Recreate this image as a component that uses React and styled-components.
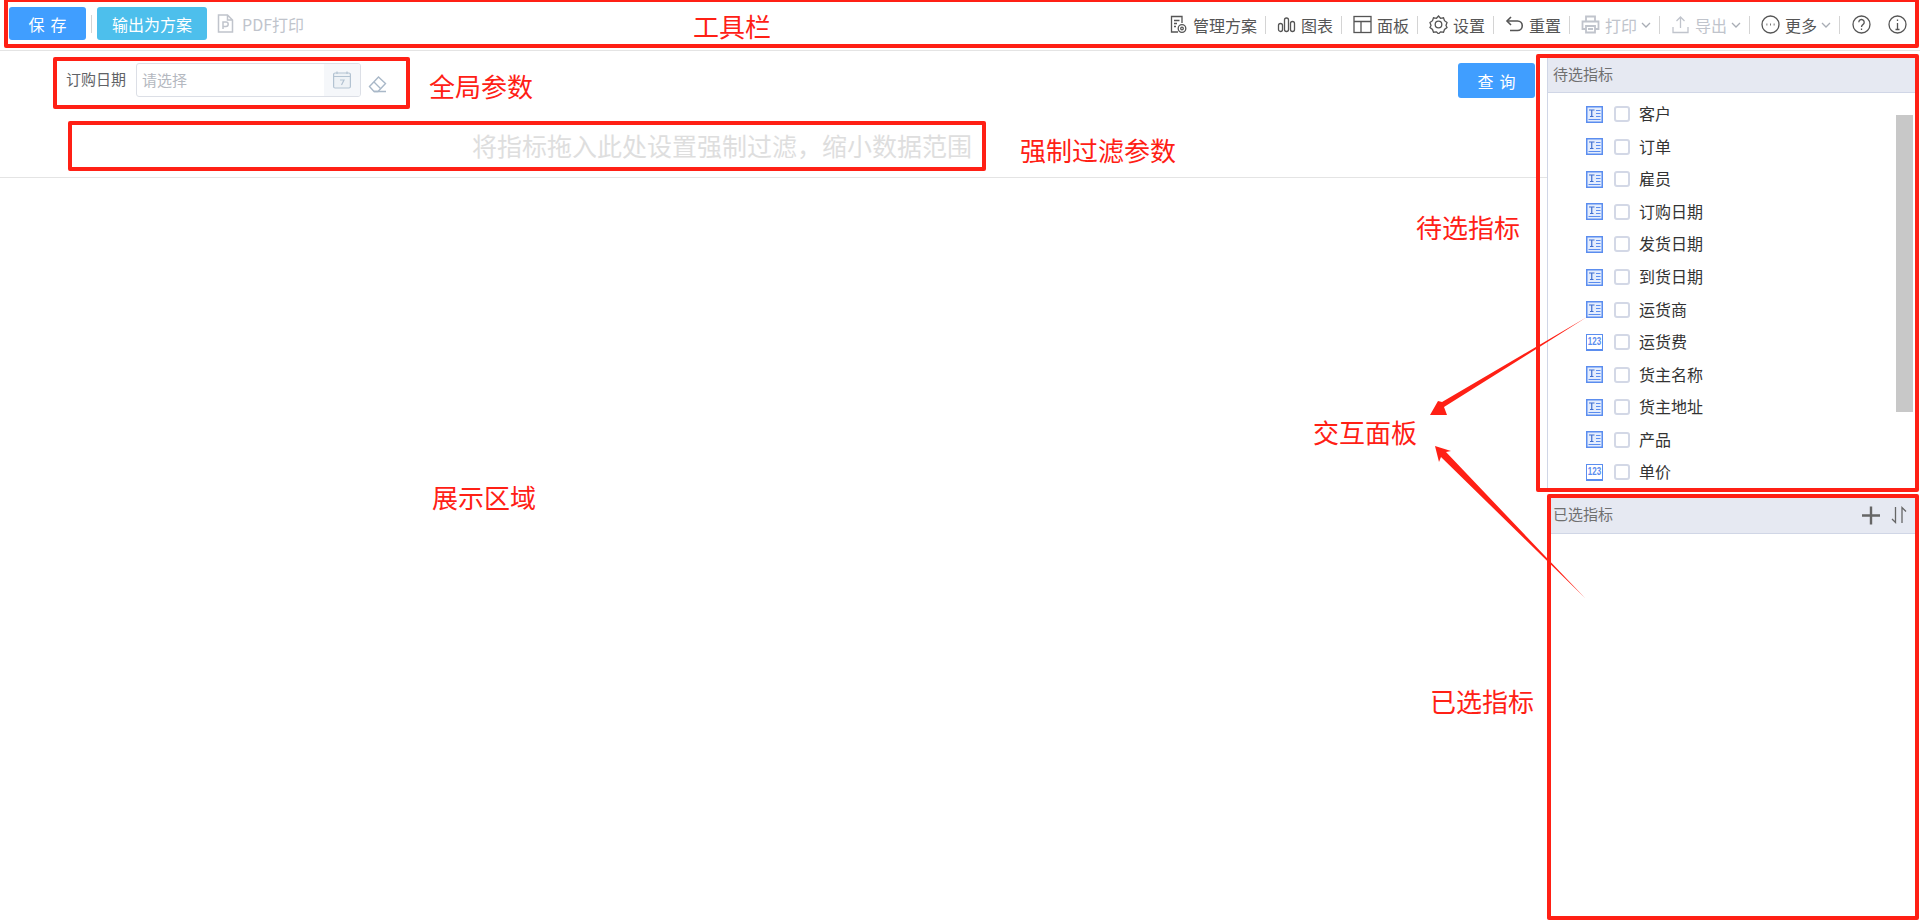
import styled, { createGlobalStyle } from "styled-components";

const GlobalStyle = createGlobalStyle`
  html, body {
    margin: 0;
    padding: 0;
    background: #fff;
    overflow: hidden;
  }
  body {
    font-family: "Noto Sans CJK SC", "Liberation Sans", sans-serif;
  }
`;

const Page = styled.div`
  position: relative;
  width: 1920px;
  height: 922px;
  overflow: hidden;
`;

const Toolbar = styled.div`
  display: flex;
  align-items: center;
  justify-content: space-between;
  height: 51px;
  padding: 0 13px 3px 9px;
  box-sizing: border-box;
  border-bottom: 1px solid #e4e4e4;
`;
const ToolGroup = styled.div`
  display: flex;
  align-items: center;
`;
const RightTools = styled(ToolGroup)`
  margin-top: 2px;
`;
const PrimaryButton = styled.button`
  height: 33px;
  border: 0;
  border-radius: 3px;
  padding: 0;
  width: ${(p) => p.$width}px;
  background: ${(p) => p.$bg};
  color: #fff;
  font: 16px "Noto Sans CJK SC", sans-serif;
  letter-spacing: ${(p) => p.$spacing || 0}px;
  text-indent: ${(p) => p.$spacing || 0}px;
`;
const Divider = styled.span`
  width: 1px;
  height: 18px;
  background: ${(p) => p.$color || "#d4d4d4"};
  margin: ${(p) => p.$margin || "0"};
`;
const PdfLink = styled.span`
  display: flex;
  align-items: center;
  gap: 7px;
  margin-left: 9px;
  color: #c0c4cc;
  font-size: 16px;
`;
const ToolItem = styled.span`
  display: flex;
  align-items: center;
  gap: 5px;
  padding: 0 ${(p) => (p.$drop ? 7 : 8)}px 0 11px;
  font-size: 16px;
  color: ${(p) => (p.$disabled ? "#c0c4cc" : "#555")};
`;
const HelpItem = styled.span`
  display: flex;
  margin-left: ${(p) => p.$gap}px;
  color: #555;
`;
const ToolIcon = styled.svg`
  width: 19px;
  height: 19px;
  flex: none;
  fill: none;
  stroke: currentColor;
  stroke-width: ${(p) => p.$weight || 1.3};
`;
const Chevron = styled.svg`
  width: 12px;
  height: 12px;
  margin-left: -2px;
  flex: none;
  fill: none;
  stroke: #a8adb5;
  stroke-width: 1.3;
`;

const Content = styled.div`
  display: flex;
  height: 871px;
`;
const Main = styled.div`
  flex: 1;
  min-width: 0;
`;
const FilterArea = styled.div`
  height: 127px;
  box-sizing: border-box;
  border-bottom: 1px solid #e4e4e4;
  padding: 12px 12px 0 66px;
`;
const FilterRow = styled.div`
  display: flex;
  align-items: flex-start;
  justify-content: space-between;
`;
const Param = styled.div`
  display: flex;
  align-items: flex-start;
`;
const ParamLabel = styled.label`
  width: 70px;
  font-size: 15px;
  line-height: 31px;
  color: #606266;
`;
const DateInput = styled.div`
  display: flex;
  width: 225px;
  height: 34px;
  box-sizing: border-box;
  border: 1px solid #dcdfe6;
  border-radius: 3px;
  overflow: hidden;
`;
const Placeholder = styled.span`
  flex: 1;
  padding-left: 5px;
  font-size: 15px;
  line-height: 32px;
  color: #b4b8c0;
`;
const Addon = styled.span`
  display: flex;
  align-items: center;
  justify-content: center;
  width: 36px;
  background: #f5f7fa;
`;
const Eraser = styled.svg`
  width: 19px;
  height: 18px;
  margin: 12px 0 0 7px;
  fill: none;
  stroke: #a9b8c8;
  stroke-width: 1.4;
`;
const QueryButton = styled(PrimaryButton)`
  height: 35px;
`;
const DropZone = styled.div`
  width: 903px;
  margin: 30px 0 0 3px;
  text-align: right;
  font-size: 25px;
  line-height: 34px;
  color: #dedede;
  white-space: nowrap;
`;

const Side = styled.aside`
  width: 368px;
  margin-right: 5px;
  padding-top: 6px;
  display: flex;
  flex-direction: column;
  gap: 9px;
`;
const Panel = styled.section`
  height: ${(p) => p.$height}px;
  box-sizing: border-box;
  border-left: 1px solid #d0d6e6;
  border-bottom: 1px solid #d0d6e6;
  display: flex;
  flex-direction: column;
`;
const PanelHead = styled.header`
  display: flex;
  align-items: center;
  justify-content: space-between;
  height: 36px;
  flex: none;
  box-sizing: border-box;
  padding: 0 8px ${(p) => p.$lift || 0}px 5px;
  background: #e6e9f2;
  border-bottom: 1px solid #d0d6e6;
`;
const PanelTitle = styled.span`
  margin-bottom: 2px;
  font-size: 15px;
  color: #707070;
`;
const HeadTools = styled.div`
  display: flex;
  align-items: center;
  gap: 11px;
`;
const HeadIcon = styled.svg`
  width: ${(p) => p.$size}px;
  height: 20px;
  fill: none;
  stroke: #666;
  stroke-width: ${(p) => p.$weight};
`;
const PanelBody = styled.div`
  flex: 1;
  display: flex;
  min-height: 0;
  overflow: hidden;
`;
const FieldList = styled.ul`
  flex: 1;
  list-style: none;
  margin: 0;
  padding: 5px 0 0 38px;
`;
const FieldRow = styled.li`
  display: flex;
  align-items: center;
  height: 32.55px;
  font-size: 16px;
  color: #333;
`;
const FieldBox = styled.span`
  width: 16px;
  height: 16px;
  margin: 0 9px 0 11px;
  box-sizing: border-box;
  border: 2px solid #d3d8e6;
  border-radius: 3px;
  background: #fff;
`;
const FieldName = styled.span`
  margin-bottom: 2px;
`;
const FieldSvg = styled.svg`
  width: 17px;
  height: 17px;
  flex: none;
`;
const NumberIcon = styled.span`
  display: flex;
  flex: none;
  align-items: flex-start;
  justify-content: center;
  width: 17px;
  height: 17px;
  box-sizing: border-box;
  border: 1.5px solid #5b8def;
  background: #fff;
  font: 700 8px/11px "Liberation Sans", sans-serif;
  color: #5b8def;
  box-shadow: inset 0 -3px 0 -2px #5b8def;
`;
const Digits = styled.span`
  display: block;
  transform: scaleY(1.25);
  transform-origin: center;
  margin-top: 1px;
`;
const Thumb = styled.div`
  width: 17px;
  height: 297px;
  margin: 22px 2px 0 0;
  background: #c8c8c8;
  flex: none;
`;

const Overlay = styled.div`
  position: absolute;
  inset: 0;
  pointer-events: none;
`;
const RedBox = styled.div`
  position: absolute;
  left: ${(p) => p.$x}px;
  top: ${(p) => p.$y}px;
  width: ${(p) => p.$w}px;
  height: ${(p) => p.$h}px;
  box-sizing: border-box;
  border: 4px solid #ff2015;
  border-radius: 2px;
`;
const RedLabel = styled.span`
  position: absolute;
  left: ${(p) => p.$x}px;
  top: ${(p) => p.$y}px;
  font-size: 26px;
  line-height: 34px;
  color: #ff2015;
  white-space: nowrap;
`;
const Arrows = styled.svg`
  position: absolute;
  inset: 0;
  width: 1920px;
  height: 922px;
`;

const TextFieldIcon = () => (
  <FieldSvg viewBox="0 0 17 17">
    <rect x="0.75" y="0.75" width="15.5" height="15.5" fill="#e4edfd" stroke="#5b8def" strokeWidth="1.5" />
    <path d="M3 4h5.500M5.750 4v6.500M4 10.500h3.500" fill="none" stroke="#3f6fd0" strokeWidth="1.2" />
    <path d="M10 4.500h4.500M10 7.500h4.500M10 10.500h4.500M2.500 13.500h12" fill="none" stroke="#5b8def" strokeWidth="1.2" />
  </FieldSvg>
);

const fields = [
  ["客户", "text"],
  ["订单", "text"],
  ["雇员", "text"],
  ["订购日期", "text"],
  ["发货日期", "text"],
  ["到货日期", "text"],
  ["运货商", "text"],
  ["运货费", "num"],
  ["货主名称", "text"],
  ["货主地址", "text"],
  ["产品", "text"],
  ["单价", "num"],
];

const DownArrow = () => (
  <Chevron viewBox="0 0 12 12">
    <path d="M2 4l4 4 4-4" />
  </Chevron>
);

export default function App() {
  return (
    <Page>
      <GlobalStyle />
      <Toolbar>
        <ToolGroup>
          <PrimaryButton $width={77} $bg="#409eff" $spacing={6}>保存</PrimaryButton>
          <Divider $margin="0 5px" />
          <PrimaryButton $width={110} $bg="#4dbfec">输出为方案</PrimaryButton>
          <PdfLink>
            <ToolIcon viewBox="0 0 19 19" $weight={1.5}>
              <path d="M2.500 1h9l5 5v12h-14zM11.500 1v5h5" />
              <path d="M7 15V8h3a2.200 2.200 0 010 4.400H7" />
            </ToolIcon>
            PDF打印
          </PdfLink>
        </ToolGroup>
        <RightTools>
          <ToolItem>
            <ToolIcon viewBox="0 0 19 19">
              <path d="M9 17H2.500V1.500H13V8" />
              <path d="M5 5.500h5.500M5 8.500h3M5 11.500h2" />
              <circle cx="13" cy="13.500" r="3.800" />
              <circle cx="13" cy="13.500" r="1.300" />
            </ToolIcon>
            管理方案
          </ToolItem>
          <Divider />
          <ToolItem>
            <ToolIcon viewBox="0 0 19 19">
              <rect x="1.500" y="8.500" width="4" height="8" rx="2" />
              <rect x="7.500" y="3" width="4" height="13.500" rx="2" />
              <rect x="13.500" y="6.500" width="4" height="10" rx="2" />
            </ToolIcon>
            图表
          </ToolItem>
          <Divider />
          <ToolItem>
            <ToolIcon viewBox="0 0 19 19">
              <rect x="1" y="1.500" width="17" height="16" />
              <path d="M1 6.500h17M8 6.500v11" />
            </ToolIcon>
            面板
          </ToolItem>
          <Divider />
          <ToolItem>
            <ToolIcon viewBox="0 0 19 19">
              <path d="M9.500 1l2 2.300 3-.5 1 2.900 2.500 1.800-1 3 1 2-2.500 2-1 2.700-3-.3-2 2-2-2-3 .3-1-2.700-2.500-2 1-2-1-3 2.500-1.800 1-2.900 3 .5z" />
              <circle cx="9.500" cy="9.500" r="3.300" />
            </ToolIcon>
            设置
          </ToolItem>
          <Divider />
          <ToolItem>
            <ToolIcon viewBox="0 0 19 19" $weight={1.6}>
              <path d="M6 2L2 6l4 4" />
              <path d="M2 6h10.500a4.500 4.500 0 010 9.500H5" />
            </ToolIcon>
            重置
          </ToolItem>
          <Divider />
          <ToolItem $disabled $drop>
            <ToolIcon viewBox="0 0 19 19" $weight={1.8}>
              <path d="M5 6V1.500h9V6M5 14H1.500V6.500h16V14H14" />
              <path d="M5 11h9v6.500H5zM7 14h5" />
            </ToolIcon>
            打印
            <DownArrow />
          </ToolItem>
          <Divider />
          <ToolItem $disabled $drop>
            <ToolIcon viewBox="0 0 19 19">
              <path d="M9.500 13V2M5.500 6l4-4 4 4M2 12v5.500h15V12" />
            </ToolIcon>
            导出
            <DownArrow />
          </ToolItem>
          <Divider />
          <ToolItem $drop>
            <ToolIcon viewBox="0 0 19 19">
              <circle cx="9.500" cy="9.500" r="8.500" />
              <path d="M5.500 9.500h.8M9.100 9.500h.8M12.700 9.500h.8" strokeWidth="1.800" />
            </ToolIcon>
            更多
            <DownArrow />
          </ToolItem>
          <Divider />
          <HelpItem $gap={12}>
            <ToolIcon viewBox="0 0 19 19">
              <circle cx="9.500" cy="9.500" r="8.500" />
              <path d="M6.800 7.200a2.700 2.700 0 114.300 2.200c-1 .7-1.600 1.200-1.600 2.600M9.500 13.500v1.500" />
            </ToolIcon>
          </HelpItem>
          <HelpItem $gap={17}>
            <ToolIcon viewBox="0 0 19 19">
              <circle cx="9.500" cy="9.500" r="8.500" />
              <path d="M9.500 4.500v1.500M9.500 8v6.500M7.500 14.500h4" />
            </ToolIcon>
          </HelpItem>
        </RightTools>
      </Toolbar>

      <Content>
        <Main>
          <FilterArea>
            <FilterRow>
              <Param>
                <ParamLabel>订购日期</ParamLabel>
                <DateInput>
                  <Placeholder>请选择</Placeholder>
                  <Addon>
                    <svg width="18" height="18" viewBox="0 0 18 18" fill="none" stroke="#b3c3d2" strokeWidth="1.200">
                      <rect x="0.600" y="2" width="16.800" height="15" rx="1.500" fill="#eef2f6" />
                      <path d="M0.600 5.500h16.800M4 0.500v2.500M14 0.500v2.500" />
                      <path d="M7 9h4l-2.500 5" />
                    </svg>
                  </Addon>
                </DateInput>
                <Eraser viewBox="0 0 19 18">
                  <path d="M1.500 11.500L10.500 2l7 6.500-7.500 8H6z" />
                  <path d="M6 7l6.500 6.500M6 16.500h12" />
                </Eraser>
              </Param>
              <QueryButton $width={77} $bg="#409eff" $spacing={6}>查询</QueryButton>
            </FilterRow>
            <DropZone>将指标拖入此处设置强制过滤，缩小数据范围</DropZone>
          </FilterArea>
        </Main>

        <Side>
          <Panel $height={432}>
            <PanelHead>
              <PanelTitle>待选指标</PanelTitle>
            </PanelHead>
            <PanelBody>
              <FieldList>
                {fields.map(([name, kind]) => (
                  <FieldRow key={name}>
                    {kind === "num" ? (
                      <NumberIcon>
                        <Digits>123</Digits>
                      </NumberIcon>
                    ) : (
                      <TextFieldIcon />
                    )}
                    <FieldBox />
                    <FieldName>{name}</FieldName>
                  </FieldRow>
                ))}
              </FieldList>
              <Thumb />
            </PanelBody>
          </Panel>
          <Panel $height={421}>
            <PanelHead $lift={2}>
              <PanelTitle>已选指标</PanelTitle>
              <HeadTools>
                <HeadIcon viewBox="0 0 18 20" $size={18} $weight={2.400}>
                  <path d="M0 10.500h18M9 1.500v18" />
                </HeadIcon>
                <HeadIcon viewBox="0 0 16 20" $size={16} $weight={1.300}>
                  <path d="M4.500 2v15.500L1 14M11 18V2.500l4 4" />
                </HeadIcon>
              </HeadTools>
            </PanelHead>
          </Panel>
        </Side>
      </Content>

      <Overlay>
        <RedBox $x={4} $y={-2} $w={1915} $h={50} />
        <RedBox $x={53} $y={57} $w={357} $h={52} />
        <RedBox $x={68} $y={121} $w={918} $h={50} />
        <RedBox $x={1536} $y={54} $w={383} $h={438} />
        <RedBox $x={1547} $y={494} $w={372} $h={426} />
        <RedLabel $x={693} $y={9}>工具栏</RedLabel>
        <RedLabel $x={429} $y={69}>全局参数</RedLabel>
        <RedLabel $x={1020} $y={133}>强制过滤参数</RedLabel>
        <RedLabel $x={1416} $y={210}>待选指标</RedLabel>
        <RedLabel $x={1313} $y={415}>交互面板</RedLabel>
        <RedLabel $x={432} $y={480}>展示区域</RedLabel>
        <RedLabel $x={1430} $y={684}>已选指标</RedLabel>
        <Arrows viewBox="0 0 1920 922">
          <polygon points="1587,317 1442,402 1438,401 1430,415 1447,415 1444,407" fill="#ff2015" />
          <polygon points="1585,598 1446,452 1451,451 1435,446 1439,462 1441,457" fill="#ff2015" />
        </Arrows>
      </Overlay>
    </Page>
  );
}
